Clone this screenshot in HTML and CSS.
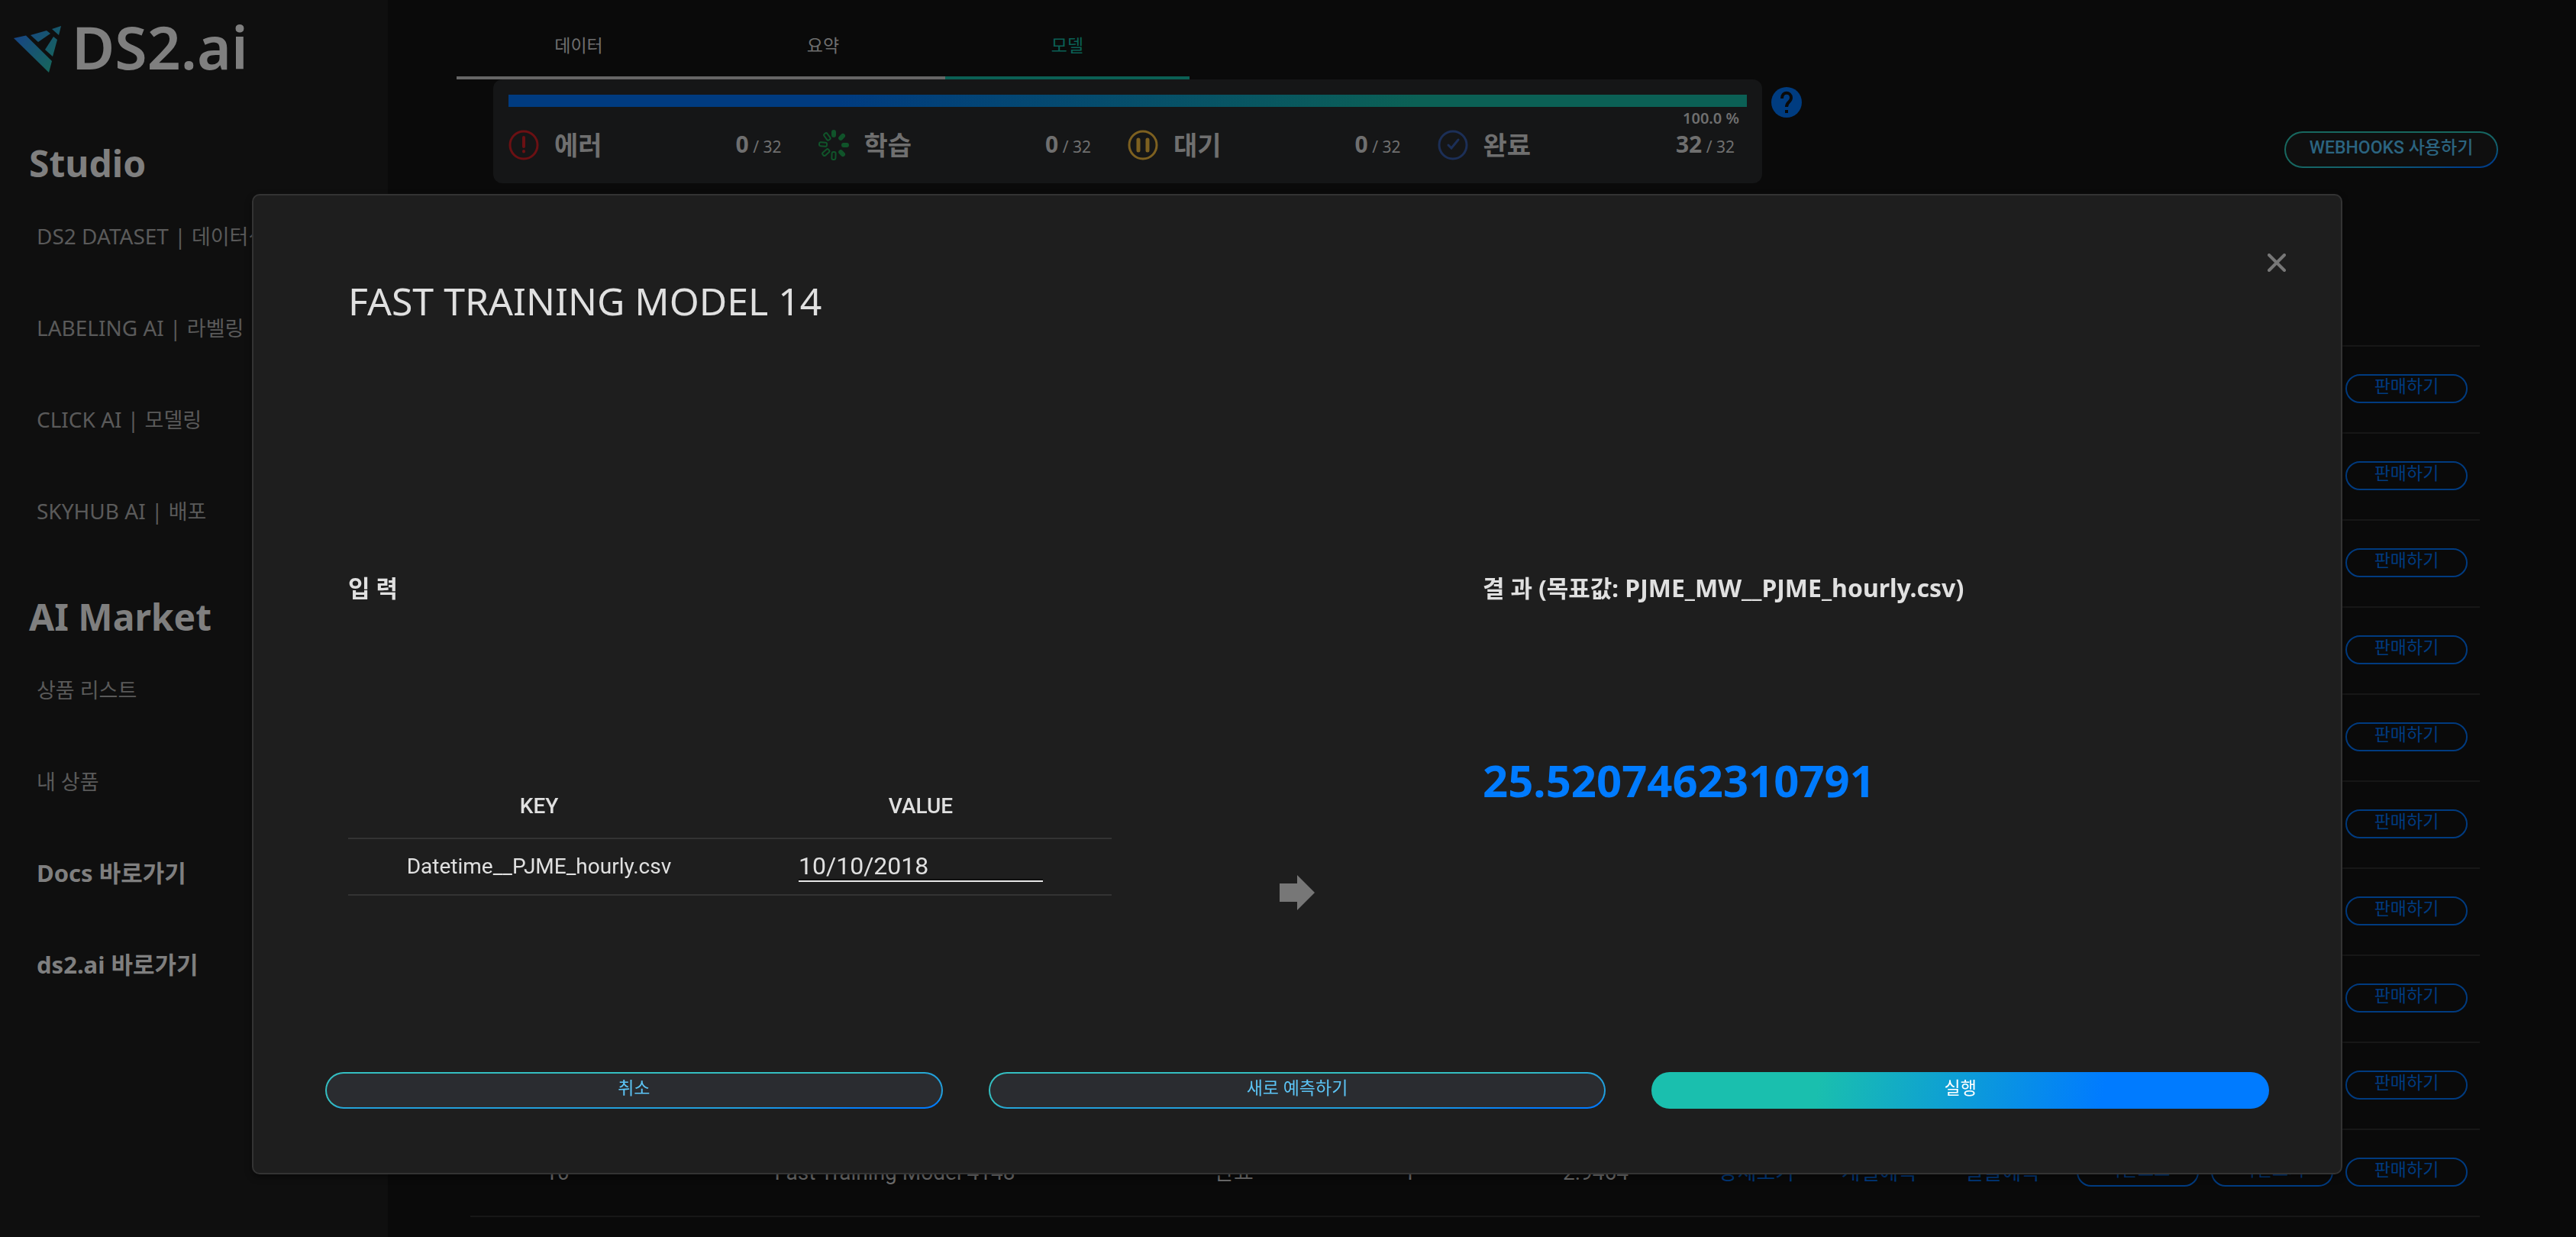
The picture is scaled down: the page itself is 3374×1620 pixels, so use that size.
FILE: index.html
```html
<!DOCTYPE html>
<html lang="ko">
<head>
<meta charset="utf-8">
<title>DS2.ai</title>
<link rel="stylesheet" href="styles.css">
</head>
<body>
<div class="app">
  <aside class="sidebar">
    <a class="brand" href="#">
      <svg class="brand-mark" viewBox="0 0 62 62" aria-hidden="true">
        <defs><linearGradient id="mark" x1="0" y1="0" x2="62" y2="50" gradientUnits="userSpaceOnUse"><stop offset="0" stop-color="#17408a"/><stop offset="1" stop-color="#176858"/></linearGradient></defs>
        <g fill="url(#mark)"><path d="M0 16 16 12.500 50 46 46 61Z"/><path d="M22 12 43 6 48 10 32 21Z"/><path d="M50 4 62 0 59 12Z"/><path d="M52 14 57 18 51 40 41 31Z"/></g>
      </svg>
      <span class="brand-name">DS2.ai</span>
    </a>
    <nav class="menu">
      <h2 class="menu-title">Studio</h2>
      <a class="menu-link" href="#">DS2 DATASET | <span class="menu-ko">데이터셋</span></a>
      <a class="menu-link" href="#">LABELING AI | <span class="menu-ko">라벨링</span></a>
      <a class="menu-link" href="#">CLICK AI | <span class="menu-ko">모델링</span></a>
      <a class="menu-link" href="#">SKYHUB AI | <span class="menu-ko">배포</span></a>
      <h2 class="menu-title">AI Market</h2>
      <a class="menu-link" href="#"><span class="menu-ko">상품 리스트</span></a>
      <a class="menu-link" href="#"><span class="menu-ko">내 상품</span></a>
      <a class="menu-link menu-link-strong" href="#">Docs 바로가기</a>
      <a class="menu-link menu-link-strong" href="#">ds2.ai 바로가기</a>
    </nav>
  </aside>

  <main class="main">
    <div class="tabs">
      <button class="tab">데이터</button>
      <button class="tab">요약</button>
      <button class="tab tab-active">모델</button>
    </div>
    <div class="status-row">
      <section class="status">
        <div class="progress"></div>
        <div class="percent">100.0 %</div>
        <div class="stats">
          <div class="stat">
            <svg class="stat-icon" viewBox="0 0 40 40" fill="none" stroke="#6b1013" stroke-width="3" stroke-linecap="round"><circle cx="20" cy="20" r="18"/><path d="M20 10V22M20 28V28.500" stroke-width="4"/></svg>
            <span class="stat-name">에러</span><span class="stat-count"><b>0</b> / 32</span>
          </div>
          <div class="stat">
            <svg class="stat-icon" viewBox="0 0 40 40" fill="none" stroke="#10542a" stroke-width="2"><g fill="#10542a"><rect x="18" y="1" width="4" height="8" rx="2"/><rect x="18" y="1" width="4" height="8" rx="2" transform="rotate(45 20 20)"/><rect x="18" y="1" width="4" height="8" rx="2" transform="rotate(90 20 20)"/><rect x="18" y="1" width="4" height="8" rx="2" transform="rotate(135 20 20)"/></g><rect x="17" y="1" width="5" height="10" rx="2" transform="rotate(182 20 20)"/><rect x="17" y="1" width="5" height="10" rx="2" transform="rotate(229 20 20)"/><rect x="17" y="1" width="5" height="10" rx="2" transform="rotate(276 20 20)"/><rect x="17" y="1" width="5" height="10" rx="2" transform="rotate(324 20 20)"/></svg>
            <span class="stat-name">학습</span><span class="stat-count"><b>0</b> / 32</span>
          </div>
          <div class="stat">
            <svg class="stat-icon" viewBox="0 0 40 40" fill="none" stroke="#7d6020" stroke-width="3" stroke-linecap="round"><circle cx="20" cy="20" r="18"/><path d="M14 13V27M26 13V27" stroke-width="5"/></svg>
            <span class="stat-name">대기</span><span class="stat-count"><b>0</b> / 32</span>
          </div>
          <div class="stat">
            <svg class="stat-icon" viewBox="0 0 40 40" fill="none" stroke="#1c2f57" stroke-width="3" stroke-linecap="round"><circle cx="20" cy="20" r="18"/><path d="M14 20 18 24 27 13"/></svg>
            <span class="stat-name">완료</span><span class="stat-count"><b>32</b> / 32</span>
          </div>
        </div>
      </section>
      <button class="help" aria-label="도움말">
        <svg viewBox="0 0 40 40"><circle cx="20" cy="20" r="20" fill="#003c80"/><path d="M14 15C14 5 26 6 26 14C26 20 20 19 20 26" fill="none" stroke="#0a0a0a" stroke-width="4"/><path d="M18 30H22V34H18Z" fill="#0a0a0a"/></svg>
      </button>
    </div>
    <div class="toolbar"><button class="webhooks">WEBHOOKS 사용하기</button></div>
    <table class="models">
      <colgroup><col class="c-no"><col class="c-name"><col class="c-state"><col class="c-one"><col class="c-score"><col class="c-link"><col class="c-link"><col class="c-link"><col class="c-download"><col class="c-view"><col class="c-sell"></colgroup>
      <tbody>
        <tr><td colspan="10"></td><td class="cell-pill"><button class="pill">판매하기</button></td></tr>
        <tr><td colspan="10"></td><td class="cell-pill"><button class="pill">판매하기</button></td></tr>
        <tr><td colspan="10"></td><td class="cell-pill"><button class="pill">판매하기</button></td></tr>
        <tr><td colspan="10"></td><td class="cell-pill"><button class="pill">판매하기</button></td></tr>
        <tr><td colspan="10"></td><td class="cell-pill"><button class="pill">판매하기</button></td></tr>
        <tr><td colspan="10"></td><td class="cell-pill"><button class="pill">판매하기</button></td></tr>
        <tr><td colspan="10"></td><td class="cell-pill"><button class="pill">판매하기</button></td></tr>
        <tr><td colspan="10"></td><td class="cell-pill"><button class="pill">판매하기</button></td></tr>
        <tr><td colspan="10"></td><td class="cell-pill"><button class="pill">판매하기</button></td></tr>
        <tr><td>10</td><td>Fast Training Model 4148</td><td>완료</td><td>1</td><td>2.9464</td><td><a href="#">상세보기</a></td><td><a href="#">개별예측</a></td><td><a href="#">일괄예측</a></td><td class="cell-pill"><button class="pill">다운로드</button></td><td class="cell-pill"><button class="pill">파일보기</button></td><td class="cell-pill"><button class="pill">판매하기</button></td></tr>
      </tbody>
    </table>
  </main>
</div>

<div class="overlay">
  <section class="modal" role="dialog" aria-labelledby="modal-title">
    <header class="modal-head">
      <h1 class="modal-title" id="modal-title">FAST TRAINING MODEL 14</h1>
      <button class="close" aria-label="닫기"><svg viewBox="0 0 24 24"><path d="M2 2 22 22M22 2 2 22" stroke="#777" stroke-width="4" stroke-linecap="round"/></svg></button>
    </header>
    <div class="modal-body">
      <div class="inputs">
        <h2 class="section-title"><span class="title-ko">입 력</span></h2>
        <table class="fields">
          <thead><tr><th>KEY</th><th>VALUE</th></tr></thead>
          <tbody><tr><td><label for="datetime">Datetime__PJME_hourly.csv</label></td><td><input id="datetime" type="text" value="10/10/2018"></td></tr></tbody>
        </table>
      </div>
      <svg class="arrow" viewBox="0 0 46 46" aria-hidden="true"><path d="M0 11H23V0L46 23 23 46V35H0Z" fill="#777"/></svg>
      <div class="result">
        <h2 class="section-title"><span class="title-ko">결 과 (목표값:</span> PJME_MW__PJME_hourly.csv)</h2>
        <output class="value" for="datetime">25.5207462310791</output>
      </div>
    </div>
    <footer class="actions">
      <button class="action">취소</button>
      <button class="action">새로 예측하기</button>
      <button class="action action-primary">실행</button>
    </footer>
  </section>
</div>
</body>
</html>
```
FILE: styles.css
```css
* { box-sizing: border-box; }
html, body { height: 100%; }
body {
  margin: 0;
  overflow: hidden;
  background: #0a0a0a;
  color: #6f6f6f;
  font: 24px/36px Roboto, "Noto Sans CJK KR", sans-serif;
}
button, input { font: inherit; color: inherit; margin: 0; padding: 0; border: 0; background: none; }
a { color: inherit; text-decoration: none; }
h1, h2 { margin: 0; }
svg { display: block; }

.app { display: flex; height: 100%; overflow: hidden; font-family: "Noto Sans", "Noto Sans CJK KR", sans-serif; }

.sidebar { flex: 0 0 508px; background: #0f0f0f; padding: 8px 18px; }
.brand { display: flex; align-items: flex-start; gap: 14px; height: 112px; }
.brand-mark { width: 62px; height: 62px; margin-top: 26px; }
.brand-name { font-size: 77px; line-height: 108px; font-weight: 600; color: #7f7f7f; }
.menu { display: flex; flex-direction: column; padding: 59px 0 0 20px; }
.menu-title { height: 70px; font-size: 48px; line-height: 70px; font-weight: 700; color: #7f7f7f; }
.menu-link { height: 120px; padding-left: 10px; font-size: 28px; line-height: 120px; color: #5a5a5a; white-space: nowrap; }
.menu-ko { font-size: 27px; }
.menu-link-strong { font-size: 31px; font-weight: 700; color: #7f7f7f; }
.menu-link + .menu-title { margin-top: 44px; }

.main { flex: 1; min-width: 0; padding-left: 90px; }
.tabs { display: flex; }
.tab { width: 320px; height: 104px; padding-top: 18px; border-bottom: 4px solid #666; font-size: 23px; color: #6f6f6f; }
.tab-active { border-color: #0b6055; color: #0b6055; }
.status-row { display: flex; gap: 12px; padding-left: 48px; }
.status { width: 1662px; height: 136px; padding: 20px; border-radius: 12px; background: #151617; }
.progress { height: 16px; background: linear-gradient(135deg, #003b80 27%, #0b6055 73%); }
.percent { height: 30px; padding-right: 10px; font-size: 20px; line-height: 30px; font-weight: 600; text-align: right; }
.stats { display: grid; grid-template-columns: repeat(4, 1fr); }
.stat { display: flex; align-items: center; height: 40px; padding-right: 48px; }
.stat:last-child { padding-right: 16px; }
.stat-icon { width: 40px; height: 40px; }
.stat-name { margin-left: 20px; font-size: 34px; font-weight: 700; }
.stat-count { margin-left: auto; font-size: 21px; }
.stat-count b { font-size: 30px; }
.help { align-self: flex-start; width: 40px; height: 40px; margin-top: 10px; }

.toolbar { display: flex; justify-content: flex-end; height: 280px; padding-right: 102px; margin-top: -68px; }
.webhooks {
  width: 280px; height: 48px; padding-bottom: 4px;
  border: 2px solid transparent; border-radius: 24px;
  background: linear-gradient(#0f0f0f, #0f0f0f) padding-box, linear-gradient(to bottom right, #17685f 44%, #12606f 70%, #003f8a 90%) border-box;
  font: 500 23px/36px Roboto, "Noto Sans CJK KR", sans-serif; color: #2b6480;
}
.models { width: calc(100% - 144px); margin-left: 18px; border-collapse: collapse; table-layout: fixed; border-top: 2px solid #171717; font: 28px/36px Roboto, "Noto Sans CJK KR", sans-serif; }
.models tr { height: 114px; border-bottom: 2px solid #171717; }
.models td { padding: 0; text-align: center; white-space: nowrap; }
.models a { font-size: 27px; color: #003b80; }
.models .cell-pill { padding-bottom: 2px; text-align: right; }
.models .cell-pill:last-child { padding-right: 16px; }
.c-no { width: 228px; }
.c-name { width: 656px; }
.c-state { width: 232px; }
.c-one { width: 228px; }
.c-score { width: 260px; }
.c-link { width: 161px; }
.c-download { width: 177px; }
.c-view { width: 176px; }
.c-sell { width: 192px; }
.pill { width: 160px; height: 38px; border: 2px solid #003b80; border-radius: 19px; font-size: 23px; line-height: 28px; padding-bottom: 4px; color: #003b80; vertical-align: middle; }

.overlay { position: fixed; inset: 0; padding: 254px 306px 0 330px; }
.modal {
  display: flex; flex-direction: column; height: 1284px;
  border: 2px solid #333; border-radius: 10px; background: #1e1e1e;
  padding: 76px 94px 84px; color: #e0e0e0; box-shadow: 0 4px 10px #0006;
}
.modal-head { display: flex; justify-content: space-between; align-items: flex-start; padding: 0 0 0 30px; }
.modal-title { margin-top: 26px; font: 400 50px/72px "Noto Sans", sans-serif; }
.close { width: 24px; height: 24px; margin-right: -22px; }
.modal-body { display: flex; flex: 1; padding: 0 0 0 30px; }
.inputs { width: 1000px; }
.section-title { height: 48px; margin-top: 316px; font: 700 32px/48px "Noto Sans", "Noto Sans CJK KR", sans-serif; }
.title-ko { font-size: 31px; }
.fields { width: 100%; margin-top: 220px; border-collapse: collapse; table-layout: fixed; font-size: 28px; }
.fields tr { border-bottom: 2px solid #333; }
.fields th { height: 84px; padding: 0; font-weight: 500; }
.fields td { height: 74px; padding: 0; text-align: center; }
.fields input { width: 320px; height: 40px; border-bottom: 2px solid #e6e6e6; box-shadow: inset 0 -2px #111; font-size: 32px; vertical-align: middle; }
.arrow { width: 46px; height: 46px; margin: 716px 220px 0; }
.value { display: block; margin-top: 184px; font: 700 58px/88px "Noto Sans", sans-serif; color: #007bff; }
.actions { display: grid; grid-template-columns: repeat(3, 1fr); gap: 60px; }
.action {
  height: 48px; padding-bottom: 4px; border: 2px solid transparent; border-radius: 24px;
  background: linear-gradient(#2a2c30, #2a2c30) padding-box, linear-gradient(to bottom right, #34bfc2 44%, #22a0dc 52%, #22a0dc 82%, #007bff 93%) border-box;
  font-size: 23px; line-height: 36px; color: #5cc4f5;
}
.action-primary { background: linear-gradient(100deg, #1abfae 27%, #007bff 73%) border-box; color: #fff; }
```
